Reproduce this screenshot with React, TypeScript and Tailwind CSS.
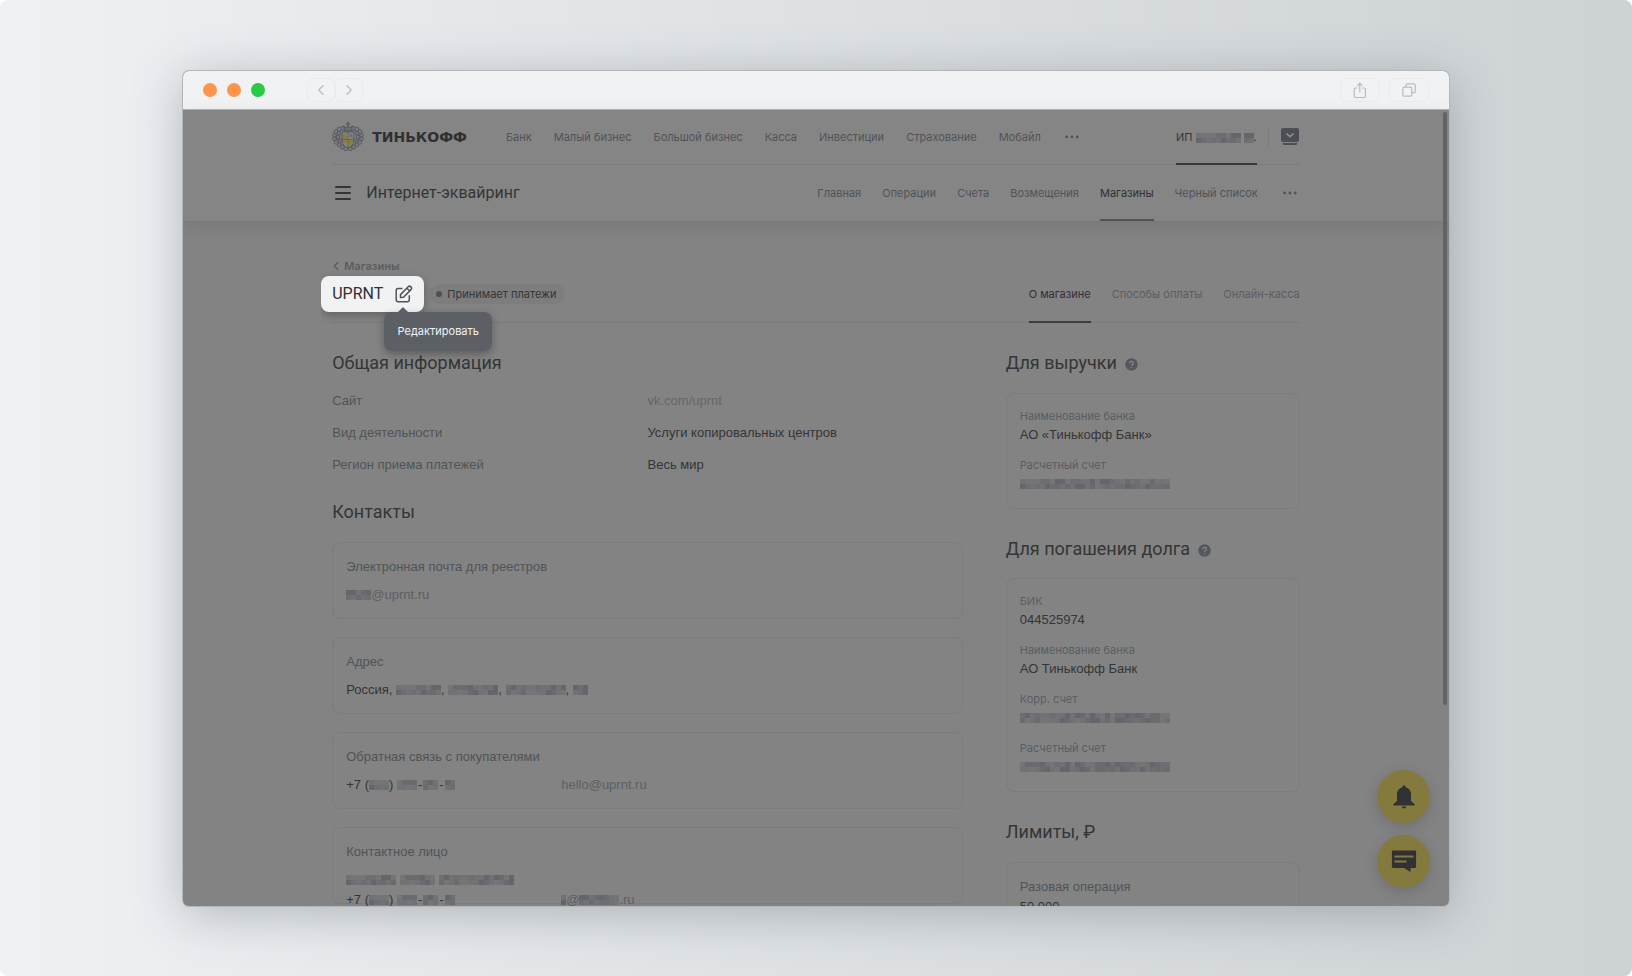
import React, { ReactNode } from "react";
import { ChevronLeft, ChevronRight } from "lucide-react";

const mainMenu = ["Банк", "Малый бизнес", "Большой бизнес", "Касса", "Инвестиции", "Страхование", "Мобайл"];
const sectionMenu = ["Главная", "Операции", "Счета", "Возмещения", "Магазины", "Черный список"];
const shopTabs = ["О магазине", "Способы оплаты", "Онлайн-касса"];

// greys used by the pixelated blocks over private data
const tones = ["fill-[#696b6f]", "fill-[#717275]", "fill-[#64666b]", "fill-[#747577]", "fill-[#6c6e71]"];

type HiddenProps = { cols: number; rows?: number; seed?: number };

function Hidden({ cols, rows = 2, seed = 0 }: HiddenProps) {
  const cells: ReactNode[] = [];
  for (let y = 0; y < rows; y++) {
    for (let x = 0; x < cols; x++) {
      const n = Math.abs(Math.sin((x + 1) * 12.9 + (y + 1) * 4.1 + seed * 7.7) * 4375);
      const tone = tones[Math.floor(n) % tones.length];
      cells.push(<rect key={`${x}-${y}`} x={x * 5} y={y * 5} width="5" height="5" className={tone} />);
    }
  }
  return (
    <svg width={cols * 5} height={rows * 5} className="inline-block shrink-0" aria-hidden="true">
      {cells}
    </svg>
  );
}

function Dots() {
  return (
    <svg width="14" height="4" viewBox="0 0 14 4" fill="currentColor" aria-hidden="true">
      <circle cx="1.6" cy="2" r="1.4" />
      <circle cx="6.9" cy="2" r="1.4" />
      <circle cx="12.2" cy="2" r="1.4" />
    </svg>
  );
}

// mantling leaves around the shield: left half, mirrored for the right one
const leaves = [
  [11, 6.2, 2.1],
  [7.2, 7.2, 2.2],
  [4, 9.8, 2.1],
  [2.4, 13.2, 1.9],
  [2.5, 16.8, 1.9],
  [4.2, 20.2, 2],
  [7.2, 22.8, 2],
  [10.4, 25, 2],
  [13.6, 26.8, 1.9],
  [7, 11, 1.6],
  [6, 15, 1.7],
  [7.6, 18.8, 1.6],
];

function Crest() {
  return (
    <svg width="32" height="30" viewBox="0 0 32 30" fill="none" stroke="#50545b" aria-hidden="true">
      <ellipse cx="16" cy="16" rx="12.5" ry="11" fill="#777a7e" stroke="none" />
      {leaves.map(([x, y, r]) => (
        <g key={`${x}-${y}`} strokeWidth=".8" fill="#7b7d80">
          <circle cx={x} cy={y} r={r} />
          <circle cx={32 - x} cy={y} r={r} />
        </g>
      ))}
      <path d="M12.600 9 11.600 4.400l2.600 1.400L16 3.400l1.800 2.400 2.600-1.400-1 4.600z" fill="#6d7074" strokeWidth=".9" />
      <circle cx="16" cy="1.9" r="1.4" fill="#6d7074" strokeWidth=".8" />
      <path d="M10.200 10h11.600v8.500c0 4.200-2.600 6.300-5.800 7.500-3.200-1.200-5.800-3.300-5.800-7.500z" fill="#828486" strokeWidth=".8" />
      <path d="M11 11.500h2.500v3h2v3h5.300v1.500c-.3 2.800-2 4.400-4.800 5.700v-4.500h-2.500v1.800c-1.500-1.200-2.500-2.600-2.500-4.500z" fill="#8d7f35" stroke="none" />
      <path d="M16 10v16M10.300 17.500h11.400M17.500 12l2.500 3.500M20 12l-2.200 3" strokeWidth=".6" />
    </svg>
  );
}

function Question() {
  return (
    <svg width="13" height="13" viewBox="0 0 13 13" className="mt-[2px]" aria-hidden="true">
      <circle cx="6.5" cy="6.5" r="6.2" fill="#54575d" />
      <path d="M4.700 5.200c0-2.400 3.700-2.300 3.700-.1 0 1.300-1.800 1.400-1.800 2.600M6.600 9v1.200" fill="none" stroke="#858585" strokeWidth="1.3" />
    </svg>
  );
}

function Card({ label, children }: { label: string; children: ReactNode }) {
  return (
    <section className="h-[77px] shrink-0 rounded-lg border border-[#7b7c7d] px-[13px] pt-[14px] leading-5">
      <h3 className="text-[#505357]">{label}</h3>
      <div className="mt-2">{children}</div>
    </section>
  );
}

function Field({ label, children }: { label: string; children: ReactNode }) {
  return (
    <div className="h-[49px]">
      <dt className="font-[Inter,sans-serif] text-[11px] leading-4 text-[#5a5d61]">{label}</dt>
      <dd className="mt-px flex h-5 items-center leading-5 text-[#343536]">{children}</dd>
    </div>
  );
}

function Phone() {
  return (
    <span className="flex w-[215px] items-center">
      +7&nbsp;(
      <Hidden cols={4} />)&nbsp;
      <Hidden cols={4} seed={2} />
      <span className="px-px">-</span>
      <Hidden cols={3} seed={1} />
      <span className="px-px">-</span>
      <Hidden cols={2} seed={4} />
    </span>
  );
}

function TitleBar() {
  const cell = "flex h-6 items-center justify-center rounded-md border border-[#eaebed] text-[#b9bcbf]";
  return (
    <div className="flex h-[39px] shrink-0 items-center border-b border-[#b4b7b9] bg-[#f1f2f4] px-5">
      <div className="flex gap-[10px]">
        <span className="size-[14px] rounded-full bg-[#ff954c]" />
        <span className="size-[14px] rounded-full bg-[#ff954c]" />
        <span className="size-[14px] rounded-full bg-[#2acb44]" />
      </div>
      <div className="ml-[42px] flex">
        <button aria-label="Назад" className={`${cell} w-7`}><ChevronLeft size={18} strokeWidth={1.5} /></button>
        <button aria-label="Вперед" className={`${cell} w-7`}><ChevronRight size={18} strokeWidth={1.5} /></button>
      </div>
      <div className="ml-auto flex gap-[9px]">
        <button aria-label="Поделиться" className={`${cell} w-10`}>
          <svg width="14" height="17" viewBox="0 0 14 17" fill="none" stroke="currentColor" strokeWidth="1.2">
            <path d="M4.500 6H2.500C1.600 6 1.200 6.500 1.200 7.300v6.900c0 .8.500 1.300 1.300 1.300h8.600c.8 0 1.300-.5 1.300-1.300V7.300c0-.8-.5-1.300-1.300-1.300H9.200M6.800 10.500V1.200M4.200 3.800l2.600-2.600 2.600 2.600" />
          </svg>
        </button>
        <button aria-label="Вкладки" className={`${cell} w-10`}>
          <svg width="14" height="14" viewBox="0 0 14 14" fill="none" stroke="currentColor" strokeWidth="1.2">
            <rect x=".8" y="4.2" width="9" height="9" rx="1.5" />
            <path d="M4 4.200V2.300C4 1.400 4.500.8 5.400.8h6.400c.9 0 1.400.6 1.400 1.500v6.200c0 .9-.5 1.400-1.400 1.400h-2" />
          </svg>
        </button>
      </div>
    </div>
  );
}

function Header() {
  return (
    <header className="shrink-0 bg-[#858585] font-[Inter,sans-serif] shadow-[0_4px_16px_rgba(0,0,0,0.1)]">
      <div className="mx-auto w-[76.4%]">
        <div className="flex h-[55px] items-center border-b border-[#7a7b7c] text-[11px] text-[#505358]">
          <a href="#" className="flex items-center gap-2" aria-label="Тинькофф">
            <Crest />
            <span className="font-['DejaVu_Sans',sans-serif] text-[14px] font-bold text-[#2f3032]">ТИНЬКОФФ</span>
          </a>
          <nav className="ml-[39px] flex items-center gap-[22px]">
            {mainMenu.map((item) => (
              <a href="#" key={item} className="whitespace-nowrap">{item}</a>
            ))}
            <button aria-label="Еще" className="ml-[2px]"><Dots /></button>
          </nav>
          <div className="ml-auto flex h-[55px] items-center">
            <a href="#" className="-mb-px flex h-[55px] items-center border-y-2 border-t-transparent border-b-[#38393b] text-[#343536]">
              ИП&nbsp;<Hidden cols={9} />&nbsp;<Hidden cols={2} seed={3} />.
            </a>
            <span className="ml-[11px] h-5 w-px bg-[#7b7c7d]" />
            <button aria-label="Профиль" className="ml-3 mr-px">
              <svg width="18" height="18" viewBox="0 0 18 18" fill="none">
                <rect width="18" height="14" rx="2" fill="#4b4e54" />
                <path d="M1.500 15h15c-.3 1.500-1 2-2 2h-11c-1 0-1.700-.5-2-2z" fill="#4b4e54" />
                <path d="m5.500 5.500 3.500 3.200 3.500-3.200" stroke="#8f9092" strokeWidth="1.6" />
              </svg>
            </button>
          </div>
        </div>
        <div className="flex h-14 items-center text-[11px] text-[#505358]">
          <button aria-label="Меню" className="ml-[3px] flex w-4 flex-col gap-1">
            <span className="h-[2px] rounded bg-[#343536]" />
            <span className="h-[2px] rounded bg-[#343536]" />
            <span className="h-[2px] rounded bg-[#343536]" />
          </button>
          <h1 className="ml-[15px] font-[Roboto,sans-serif] text-[16px] text-[#343536]">Интернет-эквайринг</h1>
          <nav className="ml-auto flex h-14 items-center gap-[21px]">
            {sectionMenu.map((item) => (
              <a
                href="#"
                key={item}
                className={`flex h-14 items-center whitespace-nowrap border-y-2 border-t-transparent ${
                  item === "Магазины" ? "border-b-[#505358] text-[#2f3032]" : "border-b-transparent"
                }`}
              >
                {item}
              </a>
            ))}
            <button aria-label="Еще" className="ml-1 mr-[3px]"><Dots /></button>
          </nav>
        </div>
      </div>
    </header>
  );
}

function ShopTitle() {
  return (
    <div className="flex h-[47px] items-start justify-between border-b border-[#7a7b7c] font-[Inter,sans-serif]">
      <div className="flex items-center">
        <div className="relative z-10 -ml-[11px] flex h-9 items-center gap-3 rounded-lg bg-[#f1f2f4] pl-[11px] pr-[11px] shadow-[0_3px_8px_rgba(0,0,0,0.25)]">
          <h2 className="font-[Roboto,sans-serif] text-[16px] text-[#2f3032]">UPRNT</h2>
          <button aria-label="Редактировать" className="relative text-[#505358]">
            <svg width="18" height="18" viewBox="0 0 18 18" fill="none" stroke="currentColor" strokeWidth="1.5" strokeLinejoin="round">
              <path d="M7.500 3.500H3.200C2 3.500 1.200 4.300 1.200 5.500v9.300c0 1.200.8 2 2 2h9.100c1.200 0 2-.8 2-2v-4.500" />
              <path d="M5.500 12.600v-3l7.700-7.800c.8-.8 1.800-.8 2.500-.1l.4.400c.7.700.7 1.700-.1 2.500L8.500 12.300zM12 3.300l2.700 2.700" />
            </svg>
            <span role="tooltip" className="absolute -left-[11px] top-[27px] flex h-[39px] w-[108px] items-center justify-center rounded-lg bg-[#5c5f64] text-[11px] text-[#f1f2f4] shadow-[0_3px_8px_rgba(0,0,0,0.3)]">
              <svg width="10" height="5" viewBox="0 0 10 5" className="absolute -top-[5px] left-[14px]">
                <path d="M0 5 4 1c.6-.6 1.400-.6 2 0l4 4z" fill="#5c5f64" />
              </svg>
              Редактировать
            </span>
          </button>
        </div>
        <span className="ml-[6px] flex h-5 items-center gap-[5px] rounded-full bg-[#7d7d7e] pl-[6px] pr-[9px] text-[11px] text-[#343536]">
          <i className="size-[6px] rounded-full bg-[#4d5055]" />
          Принимает платежи
        </span>
      </div>
      <nav className="flex gap-[21px] text-[11px] text-[#5a5d61]">
        {shopTabs.map((tab, i) => (
          <a
            href="#"
            key={tab}
            className={`flex h-[47px] items-start whitespace-nowrap border-b-2 pt-[9px] leading-[18px] ${
              i === 0 ? "border-[#3c3e41] text-[#2f3032]" : "border-transparent"
            }`}
          >
            {tab}
          </a>
        ))}
      </nav>
    </div>
  );
}

function App() {
  const heading = "flex items-center gap-2 font-[Roboto,sans-serif] text-[18px] leading-6 text-[#343536]";
  const box = "rounded-lg border border-[#7b7c7d] px-[13px] pt-[14px]";
  return (
    <div className="h-screen overflow-hidden rounded-lg bg-linear-to-r from-[#eff1f4] to-[#cdd2d5] px-[11.2%] pb-[70px] pt-[71px] font-['Liberation_Sans',Arial,sans-serif]">
      <div className="relative flex h-full flex-col overflow-hidden rounded-md bg-[#838383] shadow-[0_0_0_1px_#b4b7b9,0_8px_50px_rgba(70,80,90,0.35)]">
        <TitleBar />
        <Header />
        <main className="mx-auto box-content min-h-0 w-[76.4%] flex-1 overflow-hidden px-[11px] text-[13px]">
          <a href="#" className="mt-[37px] flex items-center font-[Inter,sans-serif] text-[11px] leading-4 font-semibold text-[#5a5d61]">
            <ChevronLeft size={14} strokeWidth={2.5} className="-ml-[3px] mr-px" />
            Магазины
          </a>
          <div className="mt-[2px]">
            <ShopTitle />
          </div>
          <div className="mt-7 flex gap-[43px]">
            <div className="min-w-0 flex-1">
              <h2 className={heading}>Общая информация</h2>
              <dl className="mt-4 grid grid-cols-2 gap-y-3 leading-5 text-[#505357]">
                <dt>Сайт</dt>
                <dd><a href="#" className="text-[#63666b]">vk.com/uprnt</a></dd>
                <dt>Вид деятельности</dt>
                <dd className="text-[#343536]">Услуги копировальных центров</dd>
                <dt>Регион приема платежей</dt>
                <dd className="text-[#343536]">Весь мир</dd>
              </dl>
              <h2 className={`mt-[25px] ${heading}`}>Контакты</h2>
              <div className="mt-[18px] flex flex-col gap-[18px]">
                <Card label="Электронная почта для реестров">
                  <a href="#" className="flex items-center text-[#5c5f63]"><Hidden cols={5} seed={3} />@uprnt.ru</a>
                </Card>
                <Card label="Адрес">
                  <p className="flex items-center text-[#343536]">
                    Россия,&nbsp;<Hidden cols={9} />,&nbsp;<Hidden cols={10} seed={2} />,&nbsp;
                    <Hidden cols={12} seed={1} />,&nbsp;<Hidden cols={3} seed={4} />
                  </p>
                </Card>
                <Card label="Обратная связь с покупателями">
                  <div className="flex text-[#343536]">
                    <Phone />
                    <a href="#" className="text-[#5c5f63]">hello@uprnt.ru</a>
                  </div>
                </Card>
                <Card label="Контактное лицо">
                  <div className="flex h-5 items-center gap-1">
                    <Hidden cols={10} />
                    <Hidden cols={7} seed={2} />
                    <Hidden cols={15} seed={1} />
                  </div>
                  <div className="flex text-[#343536]">
                    <Phone />
                    <a href="#" className="flex items-center text-[#5c5f63]">
                      <Hidden cols={1} />@<Hidden cols={8} seed={3} />.ru
                    </a>
                  </div>
                </Card>
              </div>
            </div>
            <aside className="w-[294px] shrink-0">
              <h2 className={heading}>Для выручки <Question /></h2>
              <dl className={`mt-[18px] h-[116px] ${box}`}>
                <Field label="Наименование банка">АО «Тинькофф Банк»</Field>
                <Field label="Расчетный счет"><Hidden cols={30} /></Field>
              </dl>
              <h2 className={`mt-7 ${heading}`}>Для погашения долга <Question /></h2>
              <dl className={`mt-[17px] h-[214px] ${box}`}>
                <Field label="БИК">044525974</Field>
                <Field label="Наименование банка">АО Тинькофф Банк</Field>
                <Field label="Корр. счет"><Hidden cols={30} seed={1} /></Field>
                <Field label="Расчетный счет"><Hidden cols={30} seed={2} /></Field>
              </dl>
              <h2 className={`mt-7 ${heading}`}>Лимиты, ₽</h2>
              <dl className={`mt-[18px] h-[116px] ${box} leading-5`}>
                <dt className="text-[#505357]">Разовая операция</dt>
                <dd className="text-[#343536]">50 000</dd>
              </dl>
            </aside>
          </div>
        </main>
        <span className="absolute right-[2px] top-[41px] h-[593px] w-1 rounded-full bg-[#616365]" />
        <div className="absolute bottom-[18px] right-[19px] flex flex-col gap-3 text-[#303132]">
          <button aria-label="Уведомления" className="flex size-[53px] items-center justify-center rounded-full bg-[#857a3e] shadow-[0_4px_14px_rgba(0,0,0,0.15)]">
            <svg width="22" height="24" viewBox="0 0 22 24" fill="currentColor">
              <path d="M11 .5c1 0 1.700.7 1.700 1.700C16 3 18 5.600 18 9v7l3.500 3v1.500H.5V19L4 16V9c0-3.400 2-6 5.300-6.800C9.300 1.200 10 .5 11 .5zM8.800 21.500h4.400c0 1.300-1 2-2.200 2s-2.200-.7-2.200-2z" />
            </svg>
          </button>
          <button aria-label="Чат" className="flex size-[53px] items-center justify-center rounded-full bg-[#857a3e] shadow-[0_4px_14px_rgba(0,0,0,0.15)]">
            <svg width="26" height="23" viewBox="0 0 26 23">
              <path d="M2 .5h22c.6 0 1.100.5 1.100 1.100v15.200c0 .6-.5 1.100-1.100 1.100h-4.500V22L13 17.900H2c-.6 0-1.100-.5-1.100-1.100V1.600C.9 1 1.400.5 2 .5z" fill="currentColor" />
              <path d="M3.500 6.500h19M3.500 11.500h12" stroke="#857a3e" strokeWidth="1.8" />
            </svg>
          </button>
        </div>
      </div>
    </div>
  );
}

export default App;
